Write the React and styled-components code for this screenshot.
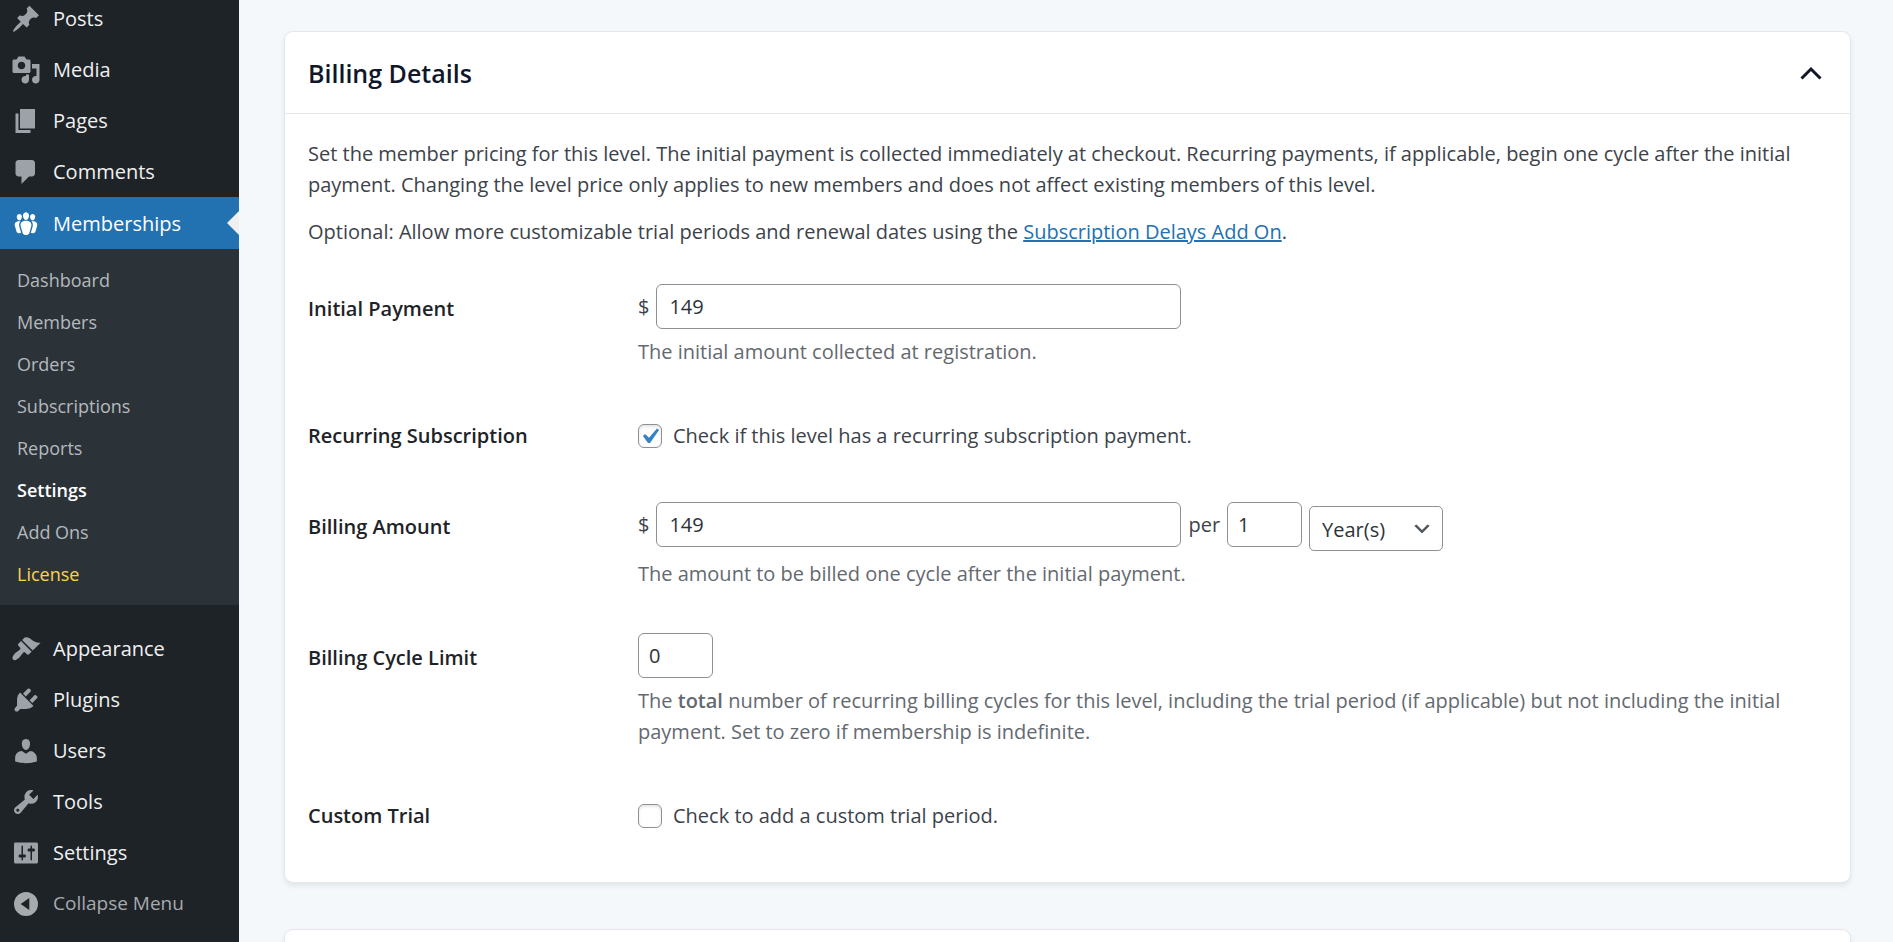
import React, { useState } from 'react'
import styled, { createGlobalStyle } from 'styled-components'

const GlobalStyle = createGlobalStyle`
  * {
    box-sizing: border-box;
  }
  body {
    margin: 0;
    background: #f4f8fb;
    color: #3c434a;
    font-family: 'Open Sans', 'Noto Sans', sans-serif;
    font-size: 20px;
    line-height: 31px;
  }
  input, select, button {
    font: inherit;
  }
`

const Shell = styled.div`
  display: flex;
  height: 100vh;
  overflow: hidden;
`

const Sidebar = styled.nav`
  flex: 0 0 239px;
  background: #1d2327;
  overflow: hidden;
`

const MenuList = styled.ul`
  list-style: none;
  margin: ${({ $scrolled }) => ($scrolled ? '-7px' : '18px')} 0 0;
  padding: 0;
`

const MenuLink = styled.a`
  position: relative;
  display: flex;
  align-items: center;
  gap: 12px;
  height: ${({ $current }) => ($current ? '52px' : '51px')};
  padding-left: 11px;
  color: ${({ $current }) => ($current ? '#fff' : '#f0f0f1')};
  background: ${({ $current }) => ($current ? '#2271b1' : 'transparent')};
  text-decoration: none;

  svg {
    width: 30px;
    height: 30px;
    fill: ${({ $current }) => ($current ? '#fff' : '#9ca2a7')};
  }
`

const Arrow = styled.span`
  position: absolute;
  right: 0;
  top: 14px;
  border: 12px solid transparent;
  border-left-width: 0;
  border-right-color: #f0f0f1;
`

const CollapseButton = styled.button`
  display: flex;
  align-items: center;
  gap: 12px;
  width: 100%;
  height: 51px;
  padding: 0 0 0 11px;
  border: 0;
  background: none;
  color: #a7aaad;
  font-size: 19px;

  svg {
    width: 30px;
    height: 30px;
    fill: #a7aaad;
  }
`

const SubMenu = styled.ul`
  list-style: none;
  margin: 0;
  padding: 10px 0;
  background: #2c3338;
`

const SubLink = styled.a`
  display: block;
  padding-left: 17px;
  font-size: 18px;
  line-height: 42px;
  text-decoration: none;
  font-weight: ${({ $current }) => ($current ? 600 : 400)};
  color: ${({ $current, $highlight }) => ($current ? '#fff' : $highlight ? '#fcd34d' : '#b4b9be')};
`

const Content = styled.main`
  flex: 1;
  min-width: 0;
  padding: 31px 42px 0 45px;
`

const Card = styled.section`
  min-height: 120px;
  margin-bottom: 46px;
  background: #fff;
  border: 1px solid #e5e7eb;
  border-radius: 9px;
  box-shadow: 0 3px 5px rgba(16, 24, 40, 0.08);
`

const CardHeader = styled.header`
  display: flex;
  align-items: center;
  justify-content: space-between;
  height: 82px;
  padding: 2px 23px 0;
  border-bottom: 1px solid #e5e7eb;
`

const CardTitle = styled.h2`
  margin: 0;
  font-size: 25px;
  font-weight: 600;
  color: #0f172a;
`

const ToggleButton = styled.button`
  display: flex;
  padding: 0;
  border: 0;
  background: none;
  color: #0f172a;
`

const CardBody = styled.div`
  padding: 24px 23px 21px;
`

const Paragraph = styled.p`
  margin: 0 0 16px;

  a {
    color: #2271b1;
    text-decoration-thickness: 2px;
  }
`

const FormRow = styled.div`
  display: grid;
  grid-template-columns: 330px 1fr;
`

const RowTitle = styled.div`
  padding: 30px 0;
  color: #1d2327;
  font-weight: 600;
`

const Field = styled.div`
  padding: ${({ $check }) => ($check ? '30px 0' : '21px 0 23px')};
`

const FieldLine = styled.div`
  display: flex;
  align-items: flex-start;
  gap: 7px;
  line-height: 45px;
`

const TextInput = styled.input`
  width: ${({ $small }) => ($small ? '75px' : '525px')};
  height: 45px;
  padding: 0 ${({ $small }) => ($small ? '10px' : '12px')};
  border: 1px solid #8c8f94;
  border-radius: 6px;
  background: #fff;
  color: #2c3338;
`

const SelectBox = styled.div`
  position: relative;
  width: 134px;
  height: 45px;
  margin-top: 4px;

  svg {
    position: absolute;
    right: 10px;
    top: 12px;
    pointer-events: none;
  }
`

const Select = styled.select`
  display: block;
  appearance: none;
  width: 100%;
  height: 100%;
  padding: 0 36px 0 12px;
  border: 1px solid #8c8f94;
  border-radius: 5px;
  background: #fff;
  color: #2c3338;
`

const Description = styled.p`
  margin: 7px 0 0;
  color: #646970;

  strong {
    font-weight: 600;
  }
`

const CheckLabel = styled.label`
  display: flex;
  align-items: center;
  gap: 11px;
`

const CheckBox = styled.span`
  position: relative;
  display: flex;

  input {
    appearance: none;
    width: 24px;
    height: 24px;
    margin: 0;
    border: 1px solid #8c8f94;
    border-radius: 6px;
    background: #fff;
    box-shadow: inset 0 2px 3px rgba(0, 0, 0, 0.1);
  }

  svg {
    position: absolute;
    top: -3px;
    left: -4px;
    width: 31px;
    height: 31px;
    fill: #3582c4;
    pointer-events: none;
  }
`

const icons = {
  post: 'M10.44 3.02l1.82-1.82 6.36 6.35-1.83 1.82c-1.05-.68-2.48-.57-3.41.36l-.75.75c-.92.93-1.04 2.35-.35 3.41l-1.83 1.82-2.41-2.41-2.8 2.79c-.42.42-3.38 2.71-3.8 2.29s1.86-3.39 2.28-3.81l2.79-2.79L4.1 9.36l1.83-1.82c1.05.69 2.48.57 3.4-.36l.75-.75c.93-.92 1.05-2.35.36-3.41z',
  media: 'M13 11V4c0-.55-.45-1-1-1h-1.67L9 1H5L3.67 3H2c-.55 0-1 .45-1 1v7c0 .55.45 1 1 1h10c.55 0 1-.45 1-1zM7 4.5c1.38 0 2.5 1.12 2.5 2.5S8.38 9.5 7 9.5 4.5 8.38 4.5 7 5.62 4.5 7 4.5zM14 6h5v10.5c0 1.38-1.12 2.5-2.5 2.5S14 17.88 14 16.5s1.12-2.5 2.5-2.5c.17 0 .34.02.5.05V9h-3V6zm-4 8.05V13h2v3.5c0 1.38-1.12 2.5-2.5 2.5S7 17.88 7 16.5 8.12 14 9.5 14c.17 0 .34.02.5.05z',
  page: 'M6 15V2h10v13H6zm-1 1h8v2H3V5h2v11z',
  comment: 'M5 2h9c1.1 0 2 .9 2 2v7c0 1.1-.9 2-2 2h-2l-5 5v-5H5c-1.1 0-2-.9-2-2V4c0-1.1.9-2 2-2z',
  groups: 'M8.03 4.46c-.29 1.28.55 3.46 1.97 3.46 1.41 0 2.25-2.18 1.96-3.46-.22-.98-1.08-1.63-1.96-1.63-.89 0-1.74.65-1.97 1.63zm-4.13.9c-.25 1.08.47 2.93 1.67 2.93s1.92-1.85 1.67-2.93c-.19-.83-.92-1.39-1.67-1.39s-1.48.56-1.67 1.39zm8.86 0c-.25 1.08.47 2.93 1.66 2.93 1.2 0 1.92-1.85 1.67-2.93-.19-.83-.92-1.39-1.67-1.39-.74 0-1.47.56-1.66 1.39zm-.59 11.43l1.25-4.3C14.2 10 12.71 8.47 10 8.47c-2.72 0-4.21 1.53-3.44 4.02l1.26 4.3C8.05 17.51 9 18 10 18c.98 0 1.94-.49 2.17-1.21zm-6.1-7.63c-.49.67-.96 1.83-.42 3.59l1.12 3.79c-.34.2-.77.31-1.2.31-.85 0-1.65-.41-1.85-1.03l-1.07-3.65c-.65-2.11.61-3.4 2.92-3.4.27 0 .54.02.79.06-.1.1-.2.22-.29.33zm8.35-.39c2.31 0 3.58 1.29 2.92 3.4l-1.07 3.65c-.2.62-1 1.03-1.85 1.03-.43 0-.86-.11-1.2-.31l1.11-3.77c.55-1.78.08-2.94-.42-3.61-.08-.11-.18-.23-.28-.33.25-.04.51-.06.79-.06z',
  appearance: 'M14.48 11.06L7.41 3.99l1.5-1.5c.5-.56 2.3-.47 3.51.32 1.21.8 1.43 1.28 2.91 2.1 1.18.64 2.45 1.26 4.45.85zm-.71.71L6.7 4.7 4.93 6.47c-.39.39-.39 1.02 0 1.41l1.06 1.06c.39.39.39 1.03 0 1.42-.6.6-1.43 1.11-2.21 1.69-.35.26-.7.53-1.01.84C1.43 14.23.4 16.08 1.4 17.07c.99 1 2.84-.03 4.18-1.36.31-.31.58-.66.85-1.02.57-.78 1.08-1.61 1.69-2.21.39-.39 1.02-.39 1.41 0l1.06 1.06c.39.39 1.02.39 1.41 0z',
  plugins: 'M13.11 4.36L9.87 7.6 8 5.73l3.24-3.24c.35-.34 1.05-.2 1.56.32.52.51.66 1.21.31 1.55zm-8 1.77l.91-1.12 9.01 9.01-1.19.84c-.71.71-2.63 1.16-3.82 1.16H6.14L4.9 17.26c-.59.59-1.54.59-2.12 0-.59-.58-.59-1.53 0-2.12l1.24-1.24v-3.88c0-1.13.4-3.19 1.09-3.89zm7.26 3.97l3.24-3.24c.34-.35 1.04-.21 1.55.31.52.51.66 1.21.31 1.55l-3.24 3.25z',
  users: 'M10 9.25c-2.27 0-2.73-3.44-2.73-3.44C7 4.02 7.82 2 9.97 2c2.16 0 2.98 2.02 2.71 3.81 0 0-.41 3.44-2.68 3.44zm0 2.57L12.72 10c2.39 0 4.52 2.33 4.52 4.53v2.49s-3.65 1.13-7.24 1.13c-3.65 0-7.24-1.13-7.24-1.13v-2.49c0-2.25 1.94-4.48 4.47-4.48z',
  tools: 'M16.68 9.77c-1.34 1.34-3.3 1.67-4.95.99l-5.41 6.52c-.99.99-2.59.99-3.58 0s-.99-2.59 0-3.57l6.52-5.42c-.68-1.65-.35-3.61.99-4.95 1.28-1.28 3.12-1.62 4.72-1.06l-2.89 2.89 2.82 2.82 2.86-2.87c.53 1.58.18 3.39-1.08 4.65zM3.81 16.21c.4.39 1.04.39 1.43 0 .4-.4.4-1.04 0-1.43-.39-.4-1.03-.4-1.43 0-.39.39-.39 1.03 0 1.43z',
  settings: 'M18 16V4c0-.55-.45-1-1-1H3c-.55 0-1 .45-1 1v12c0 .55.45 1 1 1h14c.55 0 1-.45 1-1zM8 11h1c.55 0 1 .45 1 1s-.45 1-1 1H8v1.5c0 .28-.22.5-.5.5s-.5-.22-.5-.5V13H6c-.55 0-1-.45-1-1s.45-1 1-1h1V5.5c0-.28.22-.5.5-.5s.5.22.5.5V11zm5-2h-1c-.55 0-1-.45-1-1s.45-1 1-1h1V5.5c0-.28.22-.5.5-.5s.5.22.5.5V7h1c.55 0 1 .45 1 1s-.45 1-1 1h-1v5.5c0 .28-.22.5-.5.5s-.5-.22-.5-.5V9z',
  collapse: 'M10 2a8 8 0 1 0 0 16 8 8 0 0 0 0-16zM12.2 6v8L6.4 10z',
  check: 'M14.83 4.89l1.34.94-5.81 8.38H9.02L5.78 9.67l1.34-1.25 2.57 2.4z',
}

const topMenu = [
  { icon: 'post', label: 'Posts' },
  { icon: 'media', label: 'Media' },
  { icon: 'page', label: 'Pages' },
  { icon: 'comment', label: 'Comments' },
  { icon: 'groups', label: 'Memberships', current: true },
]

const subMenu = ['Dashboard', 'Members', 'Orders', 'Subscriptions', 'Reports', 'Settings', 'Add Ons', 'License']

const bottomMenu = [
  { icon: 'appearance', label: 'Appearance' },
  { icon: 'plugins', label: 'Plugins' },
  { icon: 'users', label: 'Users' },
  { icon: 'tools', label: 'Tools' },
  { icon: 'settings', label: 'Settings' },
]

function Icon({ name }) {
  return (
    <svg viewBox="0 0 20 20" aria-hidden="true">
      <path fillRule="evenodd" d={icons[name]} />
    </svg>
  )
}

function MenuItem({ icon, label, current }) {
  return (
    <li>
      <MenuLink href="#" $current={current}>
        <Icon name={icon} />
        <span>{label}</span>
        {current && <Arrow />}
      </MenuLink>
    </li>
  )
}

function CheckField({ id, children, defaultChecked }) {
  const [checked, setChecked] = useState(Boolean(defaultChecked))
  return (
    <CheckLabel htmlFor={id}>
      <CheckBox>
        <input id={id} type="checkbox" checked={checked} onChange={(e) => setChecked(e.target.checked)} />
        {checked && <Icon name="check" />}
      </CheckBox>
      {children}
    </CheckLabel>
  )
}

export default function App() {
  const [open, setOpen] = useState(true)

  return (
    <>
      <GlobalStyle />
      <Shell>
        <Sidebar>
          <MenuList $scrolled>
            {topMenu.map((item) => <MenuItem key={item.label} {...item} />)}
          </MenuList>
          <SubMenu>
            {subMenu.map((label) => (
              <li key={label}>
                <SubLink href="#" $current={label === 'Settings'} $highlight={label === 'License'}>{label}</SubLink>
              </li>
            ))}
          </SubMenu>
          <MenuList>
            {bottomMenu.map((item) => <MenuItem key={item.label} {...item} />)}
            <li>
              <CollapseButton type="button">
                <Icon name="collapse" />
                <span>Collapse Menu</span>
              </CollapseButton>
            </li>
          </MenuList>
        </Sidebar>
        <Content>
          <Card>
            <CardHeader>
              <CardTitle>Billing Details</CardTitle>
              <ToggleButton type="button" aria-label="Toggle Billing Details" aria-expanded={open} onClick={() => setOpen(!open)}>
                <svg width="32" height="32" viewBox="0 0 32 32" fill="none" stroke="currentColor" strokeWidth="3">
                  <path d={open ? 'M6.5 20.5L16 11l9.5 9.5' : 'M6.5 11L16 20.5 25.5 11'} />
                </svg>
              </ToggleButton>
            </CardHeader>
            {open && (
              <CardBody>
                <Paragraph>
                  Set the member pricing for this level. The initial payment is collected immediately at checkout. Recurring payments, if applicable, begin one cycle after the initial payment. Changing the level price only applies to new members and does not affect existing members of this level.
                </Paragraph>
                <Paragraph>
                  Optional: Allow more customizable trial periods and renewal dates using the <a href="#">Subscription Delays Add On</a>.
                </Paragraph>
                <FormRow>
                  <RowTitle><label htmlFor="initial_payment">Initial Payment</label></RowTitle>
                  <Field>
                    <FieldLine>
                      <span>$</span>
                      <TextInput id="initial_payment" type="text" defaultValue="149" />
                    </FieldLine>
                    <Description>The initial amount collected at registration.</Description>
                  </Field>
                </FormRow>
                <FormRow>
                  <RowTitle>Recurring Subscription</RowTitle>
                  <Field $check>
                    <CheckField id="recurring" defaultChecked>Check if this level has a recurring subscription payment.</CheckField>
                  </Field>
                </FormRow>
                <FormRow>
                  <RowTitle><label htmlFor="billing_amount">Billing Amount</label></RowTitle>
                  <Field>
                    <FieldLine>
                      <span>$</span>
                      <TextInput id="billing_amount" type="text" defaultValue="149" />
                      <label htmlFor="cycle_number">per</label>
                      <TextInput id="cycle_number" type="text" defaultValue="1" $small />
                      <SelectBox>
                        <Select aria-label="Cycle period" defaultValue="Year">
                          <option value="Day">Day(s)</option>
                          <option value="Week">Week(s)</option>
                          <option value="Month">Month(s)</option>
                          <option value="Year">Year(s)</option>
                        </Select>
                        <svg width="22" height="22" viewBox="0 0 20 20" fill="#50575e">
                          <path d="M5 6l5 5 5-5 2 1-7 7-7-7 2-1z" />
                        </svg>
                      </SelectBox>
                    </FieldLine>
                    <Description>The amount to be billed one cycle after the initial payment.</Description>
                  </Field>
                </FormRow>
                <FormRow>
                  <RowTitle><label htmlFor="billing_limit">Billing Cycle Limit</label></RowTitle>
                  <Field>
                    <FieldLine>
                      <TextInput id="billing_limit" type="text" defaultValue="0" $small />
                    </FieldLine>
                    <Description>
                      The <strong>total</strong> number of recurring billing cycles for this level, including the trial period (if applicable) but not including the initial payment. Set to zero if membership is indefinite.
                    </Description>
                  </Field>
                </FormRow>
                <FormRow>
                  <RowTitle>Custom Trial</RowTitle>
                  <Field $check>
                    <CheckField id="custom_trial">Check to add a custom trial period.</CheckField>
                  </Field>
                </FormRow>
              </CardBody>
            )}
          </Card>
          <Card />
        </Content>
      </Shell>
    </>
  )
}
